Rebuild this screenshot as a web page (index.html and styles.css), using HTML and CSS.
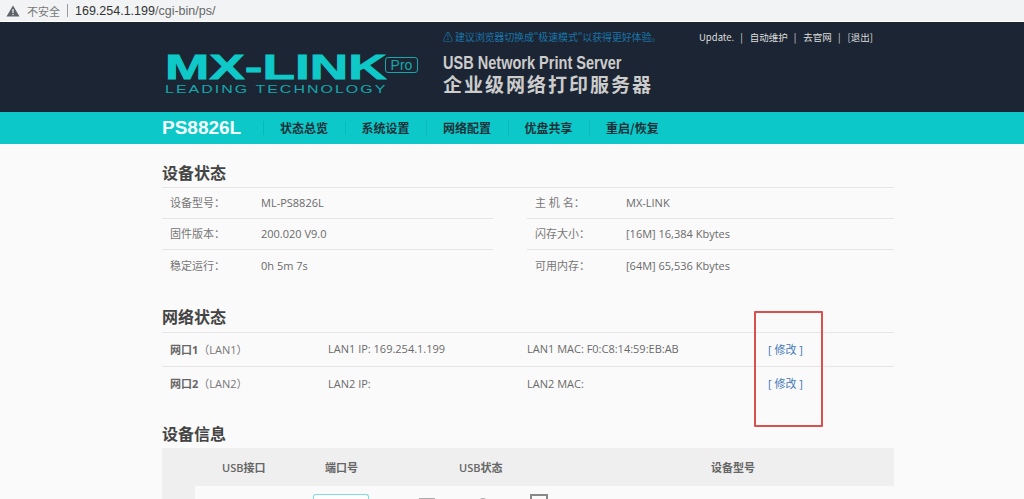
FILE: index.html
```html
<!DOCTYPE html>
<html lang="zh-CN">
<head>
    <meta charset="UTF-8">
    <title>MX-LINK</title>
    <link rel="stylesheet" href="styles.css">
</head>
<body>
    <div class="addr">
        <svg class="warn" width="14" height="12" viewBox="0 0 14 12"><path d="M7 0.5 L13.5 11.5 H0.5 Z" fill="#5f6368"/><rect x="6.4" y="4" width="1.2" height="4" fill="#f1f3f4"/><rect x="6.4" y="9" width="1.2" height="1.2" fill="#f1f3f4"/></svg>
        <span class="addr-note">不安全</span>
        <span class="addr-sep"></span>
        <span class="addr-url"><b>169.254.1.199</b>/cgi-bin/ps/</span>
    </div>

    <div class="header">
        <div class="wrap header-in">
            <div class="logo">
                <div class="logo-main"><span>MX-LINK</span></div>
                <div class="logo-sub"><span>LEADING TECHNOLOGY</span></div>
                <div class="logo-pro">Pro</div>
            </div>
            <div class="slogan">
                <div class="tip">⚠ 建议浏览器切换成"极速模式"以获得更好体验。</div>
                <div class="slogan-en">USB Network Print Server</div>
                <div class="slogan-cn">企业级网络打印服务器</div>
            </div>
            <div class="toplinks">
                <a>Update.</a><i>|</i><a>自动维护</a><i>|</i><a>去官网</a><i>|</i><a>[退出]</a>
            </div>
        </div>
    </div>

    <div class="nav">
        <div class="wrap nav-in">
            <div class="model">PS8826L</div>
            <a>状态总览</a>
            <a>系统设置</a>
            <a>网络配置</a>
            <a>优盘共享</a>
            <a>重启/恢复</a>
        </div>
    </div>

    <div class="wrap">
        <h2 class="title first">设备状态</h2>
        <div class="status">
            <div class="col">
                <div class="row"><span class="key">设备型号：</span><span>ML-PS8826L</span></div>
                <div class="row"><span class="key">固件版本：</span><span>200.020 V9.0</span></div>
                <div class="row"><span class="key">稳定运行：</span><span>0h 5m 7s</span></div>
            </div>
            <div class="col">
                <div class="row"><span class="key">主 机 名：</span><span>MX-LINK</span></div>
                <div class="row"><span class="key">闪存大小：</span><span>[16M] 16,384 Kbytes</span></div>
                <div class="row"><span class="key">可用内存：</span><span>[64M] 65,536 Kbytes</span></div>
            </div>
        </div>

        <h2 class="title second">网络状态</h2>
        <div class="lan">
            <div class="lan-row">
                <span class="lan-name"><b>网口1</b>（LAN1）</span>
                <span class="lan-ip">LAN1 IP: 169.254.1.199</span>
                <span class="lan-mac">LAN1 MAC: F0:C8:14:59:EB:AB</span>
                <a class="edit">[ 修改 ]</a>
            </div>
            <div class="lan-row last">
                <span class="lan-name"><b>网口2</b>（LAN2）</span>
                <span class="lan-ip">LAN2 IP:</span>
                <span class="lan-mac">LAN2 MAC:</span>
                <a class="edit">[ 修改 ]</a>
            </div>
            <div class="mark"></div>
        </div>

        <h2 class="title third">设备信息</h2>
        <div class="usb-head">
            <span class="c-usb">USB接口</span>
            <span class="c-port">端口号</span>
            <span class="c-state">USB状态</span>
            <span class="c-dev">设备型号</span>
        </div>
        <div class="usb-row">
            <div class="usb-side"></div>
            <div class="port-box"></div>
            <div class="ico-a"></div>
            <div class="ico-b"></div>
            <div class="ico-c"></div>
        </div>
    </div>
</body>
</html>
```

FILE: styles.css
```css
html, body {
    margin: 0;
    padding: 0;
    height: 499px;
    overflow: hidden;
}
body {
    background-color: #fafafa;
    font-family: "Open Sans", "Noto Sans CJK SC", sans-serif;
    font-size: 11px;
    color: #6a6a6a;
}
.wrap {
    width: 732px;
    margin-left: 162px;
}

/* browser bar from the screenshot */
.addr {
    height: 21px;
    border-bottom: 1px solid #fff;
    background-color: #f1f3f4;
    display: flex;
    align-items: center;
    padding-left: 6px;
    font-family: "Noto Sans CJK SC", sans-serif;
    font-size: 11px;
    color: #777;
}
.addr-note {
    margin-left: 7px;
}
.addr-sep {
    width: 1px;
    height: 13px;
    background-color: #999;
    margin: 0 7px 0 7px;
}
.addr-url {
    font-family: "Liberation Sans", sans-serif;
    font-size: 12.5px;
    color: #666;
}
.addr-url b {
    font-weight: normal;
    color: #333;
}

.header {
    height: 90px;
    background-color: #1c2533;
}
.header-in {
    display: flex;
    position: relative;
    height: 90px;
}
.logo {
    position: relative;
    width: 281px;
    color: #0fc9c9;
}
.logo-main {
    position: absolute;
    left: 3px;
    top: 30px;
    font-family: "Liberation Sans", sans-serif;
    font-weight: bold;
    font-size: 35px;
    line-height: 30px;
    -webkit-text-stroke: 0.8px #0fc9c9;
    transform-origin: 0 50%;
    transform: scaleX(1.52);
    white-space: nowrap;
}
.logo-sub {
    position: absolute;
    left: 3px;
    top: 61px;
    font-family: "Liberation Sans", sans-serif;
    font-size: 11px;
    line-height: 12px;
    letter-spacing: 1.4px;
    transform-origin: 0 50%;
    transform: scaleX(1.45);
    white-space: nowrap;
    color: #14a8ac;
}
.logo-pro {
    position: absolute;
    left: 223px;
    top: 35px;
    width: 31px;
    height: 14px;
    border: 1px solid #14a8ac;
    border-radius: 3px;
    font-family: "Liberation Sans", sans-serif;
    font-size: 14px;
    line-height: 14px;
    text-align: center;
    color: #14a8ac;
}
.slogan {
    width: 256px;
    color: #ccc;
}
.tip {
    font-family: "Noto Sans CJK SC", sans-serif;
    font-size: 10px;
    line-height: 14px;
    margin-top: 8px;
    letter-spacing: -0.15px;
    color: #1a74a8;
    white-space: nowrap;
}
.slogan-en {
    font-family: "Liberation Sans", sans-serif;
    font-weight: bold;
    font-size: 19px;
    line-height: 18px;
    margin-top: 10px;
    transform-origin: 0 50%;
    transform: scaleX(.765);
    white-space: nowrap;
}
.slogan-cn {
    font-family: "Noto Sans CJK SC", sans-serif;
    font-weight: bold;
    font-size: 19px;
    line-height: 24px;
    letter-spacing: 2px;
    white-space: nowrap;
}
.toplinks {
    display: flex;
    padding-top: 8px;
    font-family: "Noto Sans CJK SC", sans-serif;
    font-size: 9.5px;
    line-height: 14px;
    color: #ddd;
    white-space: nowrap;
}
.toplinks i {
    font-style: normal;
    margin: 0 7px 0 6px;
}

.nav {
    height: 32px;
    background-color: #0cc8c8;
    margin-bottom: 1px;
}
.nav-in {
    display: flex;
    align-items: center;
    height: 32px;
}
.model {
    width: 101px;
    font-family: "Liberation Sans", sans-serif;
    font-weight: bold;
    font-size: 19px;
    color: #f4fdfd;
}
.nav a {
    font-family: "Noto Sans CJK SC", sans-serif;
    font-weight: 700;
    font-size: 12px;
    line-height: 16px;
    margin: 0 16.5px 0 17px;
    color: #1b3038;
    position: relative;
}
.nav a::before {
    content: "";
    position: absolute;
    left: -17px;
    top: 1px;
    height: 14px;
    width: 1px;
    background-color: #0ab6b6;
}

.title {
    margin: 0;
    font-family: "Noto Sans CJK SC", sans-serif;
    font-size: 16px;
    line-height: 24px;
    font-weight: 700;
    color: #444;
    border-bottom: 1px solid #e6e6e6;
    padding-bottom: 3px;
}
.title.first {
    margin-top: 16px;
}
.title.second {
    margin-top: 23px;
    padding-bottom: 4px;
}
.title.third {
    margin-top: 20px;
    border-bottom: 0;
    padding-bottom: 0;
}

.status {
    display: flex;
    justify-content: space-between;
}
.col {
    width: 331px;
}
.col:last-child {
    width: 367px;
}
.row {
    display: flex;
    height: 31px;
    align-items: center;
    padding-left: 8px;
    border-bottom: 1px solid #e6e6e6;
    box-sizing: border-box;
    line-height: 16px;
}
.row:last-child {
    border-bottom: 0;
}
.key {
    width: 91px;
    color: #777;
}

.lan {
    position: relative;
}
.lan-row {
    display: flex;
    align-items: center;
    height: 34px;
    padding: 0 0 2px 8px;
    box-sizing: border-box;
    border-bottom: 1px solid #e6e6e6;
}
.lan-row.last {
    border-bottom: 0;
}
.lan-name {
    width: 158px;
    color: #777;
}
.lan-name b {
    color: #666;
}
.lan-ip {
    width: 199px;
}
.lan-mac {
    width: 241px;
}
.edit {
    color: #3f78b8;
}
.mark {
    position: absolute;
    left: 592px;
    top: -22px;
    width: 65px;
    height: 112px;
    border: 2px solid #d9504f;
    border-radius: 1px;
}

.usb-head {
    display: flex;
    align-items: center;
    height: 38px;
    margin-top: 3px;
    background-color: #efefef;
    font-weight: 600;
    color: #666;
}
.c-usb {
    margin-left: 60px;
    width: 103px;
}
.c-port {
    width: 134px;
}
.c-state {
    width: 252px;
}
.usb-row {
    position: relative;
    height: 20px;
}
.usb-side {
    width: 33px;
    height: 13px;
    background-color: #efefef;
}
.port-box {
    position: absolute;
    left: 151px;
    top: 8px;
    width: 54px;
    height: 12px;
    border: 1px solid #7fdcdc;
    border-bottom: 0;
    border-radius: 3px 3px 0 0;
    background-color: #fff;
}
.ico-a {
    position: absolute;
    left: 257px;
    top: 12px;
    width: 16px;
    height: 9px;
    background-color: #aaa;
}
.ico-b {
    position: absolute;
    left: 316px;
    top: 12px;
    width: 10px;
    height: 10px;
    border-radius: 50%;
    background-color: #aaa;
}
.ico-c {
    position: absolute;
    left: 368px;
    top: 8px;
    width: 14px;
    height: 14px;
    border: 2px solid #888;
    border-bottom: 0;
}
```
